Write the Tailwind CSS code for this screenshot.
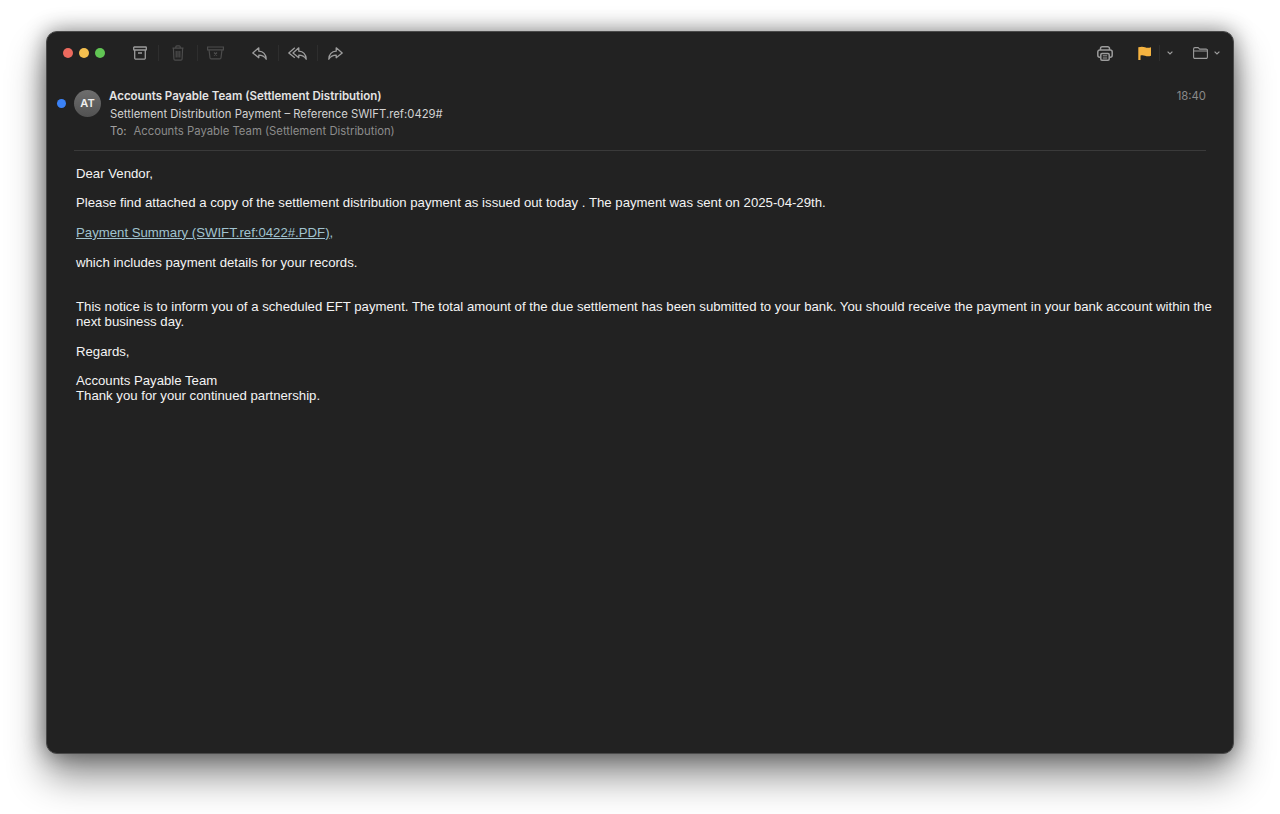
<!DOCTYPE html>
<html lang="en">
<head>
    <meta charset="UTF-8">
    <meta name="viewport" content="width=device-width, initial-scale=1.0">
    <title>Settlement Distribution Payment</title>
    <script src="https://cdn.jsdelivr.net/npm/@tailwindcss/browser@4"></script>
</head>
<body class="bg-white h-[814px] overflow-hidden pt-[31px] pl-[46px] font-['Inter','Liberation_Sans',sans-serif]">
    <div class="w-[1188px] h-[723px] rounded-[11px] bg-[#222222] border border-[#4a4a4a] shadow-[0_22px_38px_rgba(0,0,0,0.45),0_0_22px_rgba(0,0,0,0.45)] overflow-hidden">
        <!-- toolbar -->
        <div class="h-[40px] mt-px flex items-center pl-[16px] pr-[13px] text-[#9c9c9c]">
            <div class="flex gap-[6px]">
                <span class="w-[10px] h-[10px] rounded-full bg-[#ec6a5e]"></span>
                <span class="w-[10px] h-[10px] rounded-full bg-[#f4bf4f]"></span>
                <span class="w-[10px] h-[10px] rounded-full bg-[#61c554]"></span>
            </div>
            <svg class="ml-[28px]" width="14" height="14" viewBox="0 0 14 14" fill="none" stroke="currentColor" stroke-width="1.3"><rect x=".7" y="1" width="12.600" height="3" rx=".6"/><path d="M1.700 4v8a1.200 1.200 0 0 0 1.200 1.200h8.200a1.200 1.200 0 0 0 1.200-1.200V4M5 7h4"/></svg>
            <span class="w-px h-[16px] bg-[#2e2e2e] ml-[11px]"></span>
            <svg class="ml-[13px] text-[#4c4c4c]" width="12" height="16" viewBox="0 0 12 16" fill="none" stroke="currentColor" stroke-width="1.200"><path d="M.5 3.200h11M3.800 3.200V1.900a1 1 0 0 1 1-1h2.400a1 1 0 0 1 1 1v1.300M1.400 3.200l.5 10.800a1.200 1.200 0 0 0 1.200 1.100h5.800a1.200 1.200 0 0 0 1.200-1.100l.5-10.800M4.200 6v6.500M6 6v6.500M7.800 6v6.500"/></svg>
            <span class="w-px h-[16px] bg-[#2e2e2e] ml-[13px]"></span>
            <svg class="ml-[9px] text-[#4c4c4c]" width="17" height="14" viewBox="0 0 17 14" fill="none" stroke="currentColor" stroke-width="1.200"><path d="M.6 1h15.800v2.800H.6zM2 3.800l1 8a1.200 1.200 0 0 0 1.200 1.100h8.600a1.200 1.200 0 0 0 1.200-1.100l1-8M7 6.500l3 3M10 6.500l-3 3"/></svg>
            <svg class="ml-[28px]" width="15" height="13" viewBox="0 0 15 13" fill="none" stroke="currentColor" stroke-width="1.300" stroke-linejoin="round"><path d="M6.800.8.800 6l6 4.700V8.200c3 0 5.400.8 7.400 4-.3-4.600-3-7.700-7.400-8z"/></svg>
            <span class="w-px h-[16px] bg-[#2e2e2e] ml-[11px]"></span>
            <svg class="ml-[9px]" width="19" height="13" viewBox="0 0 19 13" fill="none" stroke="currentColor" stroke-width="1.300" stroke-linejoin="round"><path d="M10.800.8 5 6l5.800 4.700V8.200c3 0 5.400.8 7.400 4-.3-4.600-3-7.700-7.400-8z"/><path d="M6.800.8.800 6l6 4.700"/></svg>
            <span class="w-px h-[16px] bg-[#2e2e2e] ml-[10px]"></span>
            <svg class="ml-[10px]" width="15" height="13" viewBox="0 0 15 13" fill="none" stroke="currentColor" stroke-width="1.300" stroke-linejoin="round"><path d="M8.200.8l6 5.200-6 4.700V8.200c-3 0-5.400.8-7.400 4 .3-4.600 3-7.700 7.400-8z"/></svg>
            <svg class="ml-auto" width="16" height="15" viewBox="0 0 16 15" fill="none" stroke="currentColor" stroke-width="1.500"><path d="M3.500 4V2.600A1.800 1.800 0 0 1 5.300.8h5.400a1.800 1.800 0 0 1 1.800 1.800V4"/><path d="M3.500 11.200H2.800A2 2 0 0 1 .8 9.200V6A2 2 0 0 1 2.800 4h10.400a2 2 0 0 1 2 2v3.200a2 2 0 0 1-2 2h-.7"/><rect x="3.800" y="7.500" width="8.400" height="6.700" rx="1.200"/><path d="M5.800 9.800h4.400M5.800 12h4.400" stroke-width="1"/></svg>
            <svg class="ml-[25px]" width="13" height="14" viewBox="0 0 13 14"><path d="M.3 1.300C3 .4 5 .4 7 1.300s4 .6 6 0v8.400c-2 .8-4 .7-6 0s-3-.7-4.500-.2V14H.3z" fill="#f5b340"/></svg>
            <span class="w-px h-[16px] bg-[#2e2e2e] ml-[8px]"></span>
            <svg class="ml-[7px]" width="6" height="4" viewBox="0 0 6 4" fill="none" stroke="currentColor" stroke-width="1.200"><path d="m.6.6 2.400 2.400L5.400.6"/></svg>
            <svg class="ml-[20px]" width="15" height="12" viewBox="0 0 15 12" fill="none" stroke="currentColor" stroke-width="1.100" stroke-linejoin="round"><path d="M.6 1.900A1.300 1.300 0 0 1 1.900.6h3.300l1.400 1.500h6.500A1.300 1.300 0 0 1 14.400 3.400v6.700a1.300 1.300 0 0 1-1.300 1.300H1.900a1.300 1.300 0 0 1-1.300-1.300zM.6 4h13.800"/></svg>
            <svg class="ml-[6px]" width="6" height="4" viewBox="0 0 6 4" fill="none" stroke="currentColor" stroke-width="1.200"><path d="m.6.6 2.400 2.400L5.400.6"/></svg>
        </div>
        <!-- header -->
        <div class="ml-[10px] mr-[27px] flex pt-[15px]">
            <span class="w-[9px] h-[9px] rounded-full bg-[#3b82f6] mt-[11px]"></span>
            <span class="ml-[8px] mt-[2px] w-[27px] h-[27px] rounded-full bg-gradient-to-b from-[#6e6e6e] to-[#525252] text-[#f0f0f0] text-[11px] font-semibold flex items-center justify-center">AT</span>
            <div class="ml-[8px] text-[11.300px] leading-[17px]">
                <div class="font-semibold text-[11.500px] text-[#e4e4e4]">Accounts Payable Team (Settlement Distribution)</div>
                <div class="ml-px mt-px text-[#d2d2d2]">Settlement Distribution Payment – Reference SWIFT.ref:0429#</div>
                <div class="ml-px text-[#a0a0a0]">To:<span class="ml-[7px] text-[#8c8c8c]">Accounts Payable Team (Settlement Distribution)</span></div>
            </div>
            <span class="ml-auto text-[11.300px] leading-[17px] text-[#8a8a8a]">18:40</span>
        </div>
        <div class="ml-[27px] mr-[27px] mt-[10px] border-t border-[#3a3a3a]"></div>
        <!-- body -->
        <div class="pl-[29px] pr-[16px] pt-[15.600px] text-[#f4f4f4] text-[13.200px] leading-[14.850px] font-['Liberation_Sans',sans-serif]">
            <p>Dear Vendor,</p>
            <p class="mt-[14.850px]">Please find attached a copy of the settlement distribution payment as issued out today . The payment was sent on 2025-04-29th.</p>
            <p class="mt-[14.850px] text-[#a0c2cf]"><a href="#" class="underline">Payment Summary (SWIFT.ref:0422#.PDF)</a>,</p>
            <p class="mt-[14.850px]">which includes payment details for your records.</p>
            <p class="mt-[29.700px]">This notice is to inform you of a scheduled EFT payment. The total amount of the due settlement has been submitted to your bank. You should receive the payment in your bank account within the next business day.</p>
            <p class="mt-[14.850px]">Regards,</p>
            <p class="mt-[14.850px]">Accounts Payable Team<br>Thank you for your continued partnership.</p>
        </div>
    </div>
</body>
</html>
